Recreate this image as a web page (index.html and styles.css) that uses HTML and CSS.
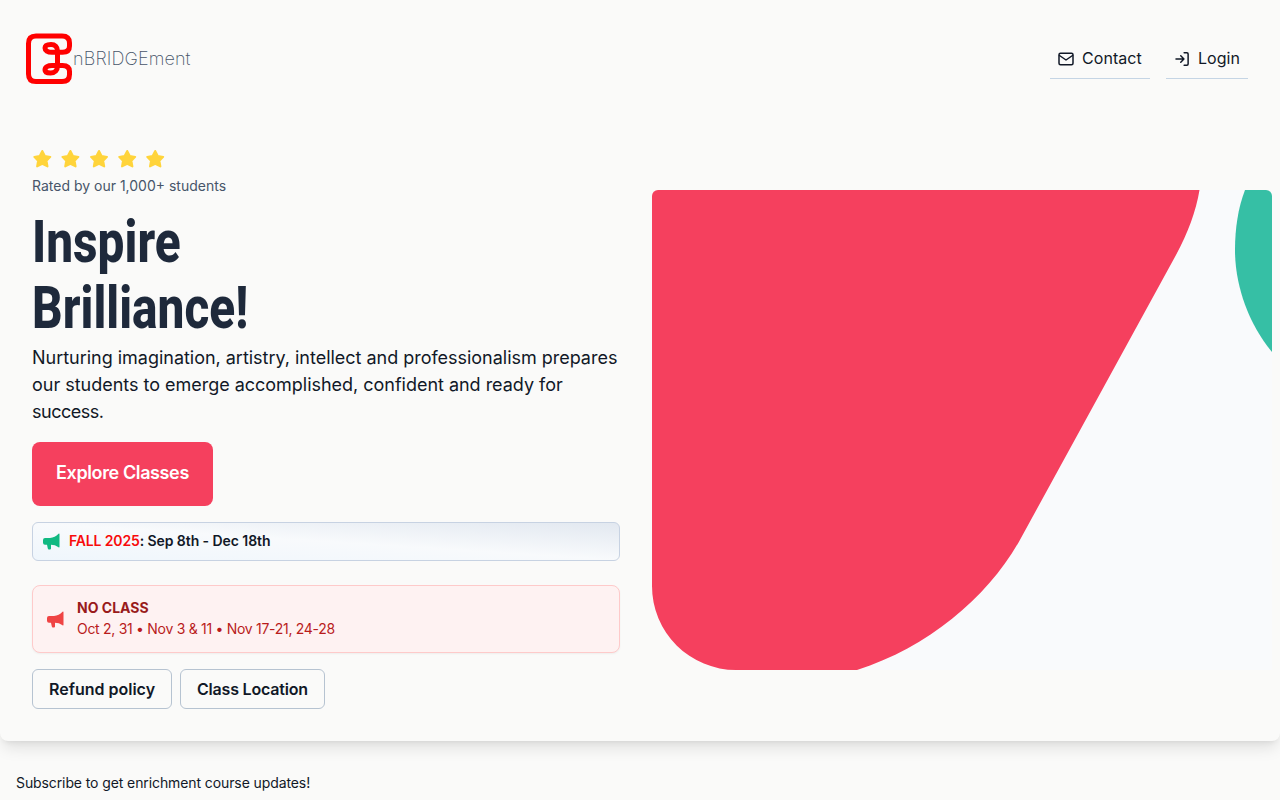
FILE: index.html
```html
<!DOCTYPE html>
<html lang="en">
<head>
<meta charset="utf-8">
<title>EnBRIDGEment</title>
<link rel="stylesheet" href="styles.css">
</head>
<body>
<div class="hero">
  <header class="header">
    <a class="logo">
      <svg width="48" height="52" viewBox="0 0 48 52" fill="none" stroke="#ff0000" stroke-width="5" stroke-linejoin="round" stroke-linecap="round"><path d="M32.500 32.500H37.500Q44.500 32.500 44.500 38.500V41.500Q44.500 48.500 37 48.500H11Q3.500 48.500 3.500 41V10.500Q3.500 3 11 3H37Q44.500 3 44.500 10V13Q44.500 19.300 37.500 19.300H27C22.500 19.300 20 17.500 20 15C20 12 23 11.500 26 11.500C30 11.500 32.500 14 32.500 18V33C32.500 37 30 40 25.500 40C22 40 20 39 20 37C20 34 23 32.500 27 32.500H32.500"/></svg>
      <span>nBRIDGEment</span>
    </a>
    <nav class="nav">
      <a class="nav-link contact"><svg width="16" height="16" viewBox="0 0 16 16" fill="none" stroke="currentColor" stroke-width="1.500" stroke-linecap="round" stroke-linejoin="round"><rect x="1" y="2.200" width="14" height="11.600" rx="1.500"/><path d="M1.500 4.500L8 9L14.500 4.500"/></svg><span>Contact</span></a>
      <a class="nav-link login"><svg width="16" height="16" viewBox="0 0 16 16" fill="none" stroke="currentColor" stroke-width="1.500" stroke-linecap="round" stroke-linejoin="round"><path d="M2 8H10M6.800 4.800L10 8L6.800 11.200M10.200 1.800H13Q14.200 1.800 14.200 3V13Q14.200 14.200 13 14.200H10.200"/></svg><span>Login</span></a>
    </nav>
  </header>
  <main class="main">
    <section class="intro">
      <svg class="stars" width="134" height="20" viewBox="0 0 134 20" fill="#ffd43b" stroke="#ffd43b" stroke-width="2" stroke-linejoin="round"><defs><path id="star" d="M10 2L12.600 7L18 7.900L14.200 11.800L15.200 17.400L10 14.800L4.800 17.400L5.800 11.800L2 7.900L7.400 7Z"/></defs><use href="#star" x=".3"/><use href="#star" x="28.400"/><use href="#star" x="57"/><use href="#star" x="85.200"/><use href="#star" x="113.200"/></svg>
      <p class="rated">Rated by our 1,000+ students</p>
      <h1 class="title"><span class="line-one">Inspire</span><br><span class="line-two">Brilliance!</span></h1>
      <p class="lead"><span class="l1">Nurturing imagination, artistry, intellect and professionalism prepares</span><br><span class="l2">our students to emerge accomplished, confident and ready for</span><br><span class="l3">success.</span></p>
      <a class="cta"><span>Explore Classes</span></a>
      <div class="notice term">
        <svg width="17" height="17" viewBox="0 0 17 17" fill="#10b981"><path d="M15.500.8Q16.500 0 16.500 1.500V13.500Q16.500 15 15.500 14.200Q12 11.800 8 11.800V15.500Q8 16.500 7 16.500H5.800Q5 16.500 4.800 15.600L4 11.800H2Q0 11.800 0 9.800V7Q0 5 2 5H7Q12 4.500 15.500.8Z"/></svg>
        <p><b>FALL 2025</b>: Sep 8th - Dec 18th</p>
      </div>
      <div class="notice closed">
        <svg width="17" height="17" viewBox="0 0 17 17" fill="#ef4444"><path d="M15.500.8Q16.500 0 16.500 1.500V13.500Q16.500 15 15.500 14.200Q12 11.800 8 11.800V15.500Q8 16.500 7 16.500H5.800Q5 16.500 4.800 15.600L4 11.800H2Q0 11.800 0 9.800V7Q0 5 2 5H7Q12 4.500 15.500.8Z"/></svg>
        <div><p class="closed-title"><span>NO CLASS</span></p><p class="dates"><span>Oct 2, 31 • Nov 3 &amp; 11 • Nov 17-21, 24-28</span></p></div>
      </div>
      <div class="actions"><a class="refund"><span>Refund policy</span></a><a class="location"><span>Class Location</span></a></div>
    </section>
    <svg class="art" width="620" height="480" viewBox="652 190 620 480"><path fill="#f9fafc" d="M700 190H1272V670H736Z"/><path fill="#f5405e" d="M652 190H1199.500C1196 211 1188 233 1176 255L1021 538C990 595 930 647 857 670H736A84 84 0 0 1 652 586Z"/><path fill="#36bfa5" d="M1245 190C1238 208 1235 229 1235 250C1235 285 1248 323 1272 352V190Z"/></svg>
  </main>
</div>
<p class="subscribe"><span>Subscribe to get enrichment course updates!</span></p>
</body>
</html>
```
FILE: styles.css
```css
* { box-sizing: border-box; }
body { margin: 0; height: 800px; overflow: hidden; background: #fafaf9; color: #111827; font-family: Inter, "Noto Sans", sans-serif; }
p, h1 { margin: 0; }
.hero { height: 741px; border-radius: 0 0 8px 8px; background: #fafaf9; box-shadow: 0 10px 15px -3px rgba(0,0,0,.1), 0 4px 6px -4px rgba(0,0,0,.1); }
.header { height: 118px; padding: 0 32px 0 25px; display: flex; align-items: center; justify-content: space-between; }
.logo { display: flex; align-items: center; color: #475569; font-size: 18px; font-weight: 200; letter-spacing: .12px; }
.logo span, .nav-link span { padding-bottom: 2px; }
.nav { display: flex; gap: 16px; }
.nav-link { height: 40px; display: flex; align-items: center; gap: 8px; padding: 0 8px; border-bottom: 1px solid #c5d5e5; font-size: 16px; letter-spacing: .06px; white-space: nowrap; }
.contact { width: 100px; }
.login { width: 82px; }
.main { display: grid; grid-template-columns: 588px 620px; column-gap: 32px; padding-left: 32px; }
.intro { padding-top: 31px; white-space: nowrap; }
.stars { display: block; overflow: visible; }
.rated { margin-top: 6px; font-size: 14px; line-height: 21px; color: #475569; }
.title { height: 132px; margin-top: 13px; color: #1e293b; font: 800 59px/66px Roboto, sans-serif; }
.title span { display: inline-block; transform-origin: 0 50%; }
.line-one { transform: scaleX(.81); }
.line-two { transform: scaleX(.81); }
.lead { margin-top: 3px; font-size: 18px; line-height: 27px; letter-spacing: -.02px; }
.l3 { letter-spacing: -.5px; }
.cta { width: 181px; height: 64px; margin-top: 17px; display: flex; align-items: center; padding: 0 24px 3px; border-radius: 8px; background: #f5405e; color: #fff; font-size: 18px; font-weight: 600; letter-spacing: -.38px; }
.notice { display: flex; align-items: center; border: 1px solid; font-size: 14px; line-height: 21px; }
.notice p { position: relative; top: -1px; }
.term { height: 39px; margin-top: 16px; padding-left: 10px; gap: 9px; border-color: #c7d2e2; border-radius: 6px; background: linear-gradient(to top right, #eff6fc, #f8fafc 50%, #e2e8f0); font-weight: 600; letter-spacing: -.07px; }
.term b { color: #f80b0b; font-weight: 600; letter-spacing: -.15px; }
.closed { height: 68px; margin-top: 24px; padding-left: 14px; gap: 13px; border-color: #fecaca; border-radius: 8px; background: #fef2f2; box-shadow: 0 1px 2px rgba(0,0,0,.05); color: #b91c1c; }
.closed-title { font-weight: 700; color: #991b1b; }
.dates { letter-spacing: -.29px; }
.actions { display: flex; gap: 8px; margin-top: 16px; }
.actions a { height: 40px; display: flex; align-items: center; padding-left: 16px; border: 1px solid #b6c3d1; border-radius: 6px; font-size: 16px; font-weight: 600; }
.refund { width: 140px; }
.location { width: 145px; letter-spacing: -.2px; }
.art { display: block; margin-top: 72px; border-radius: 6px 6px 0 0; }
.subscribe { padding: 31px 16px; font-size: 14px; line-height: 21px; letter-spacing: -.1px; white-space: nowrap; }
```
